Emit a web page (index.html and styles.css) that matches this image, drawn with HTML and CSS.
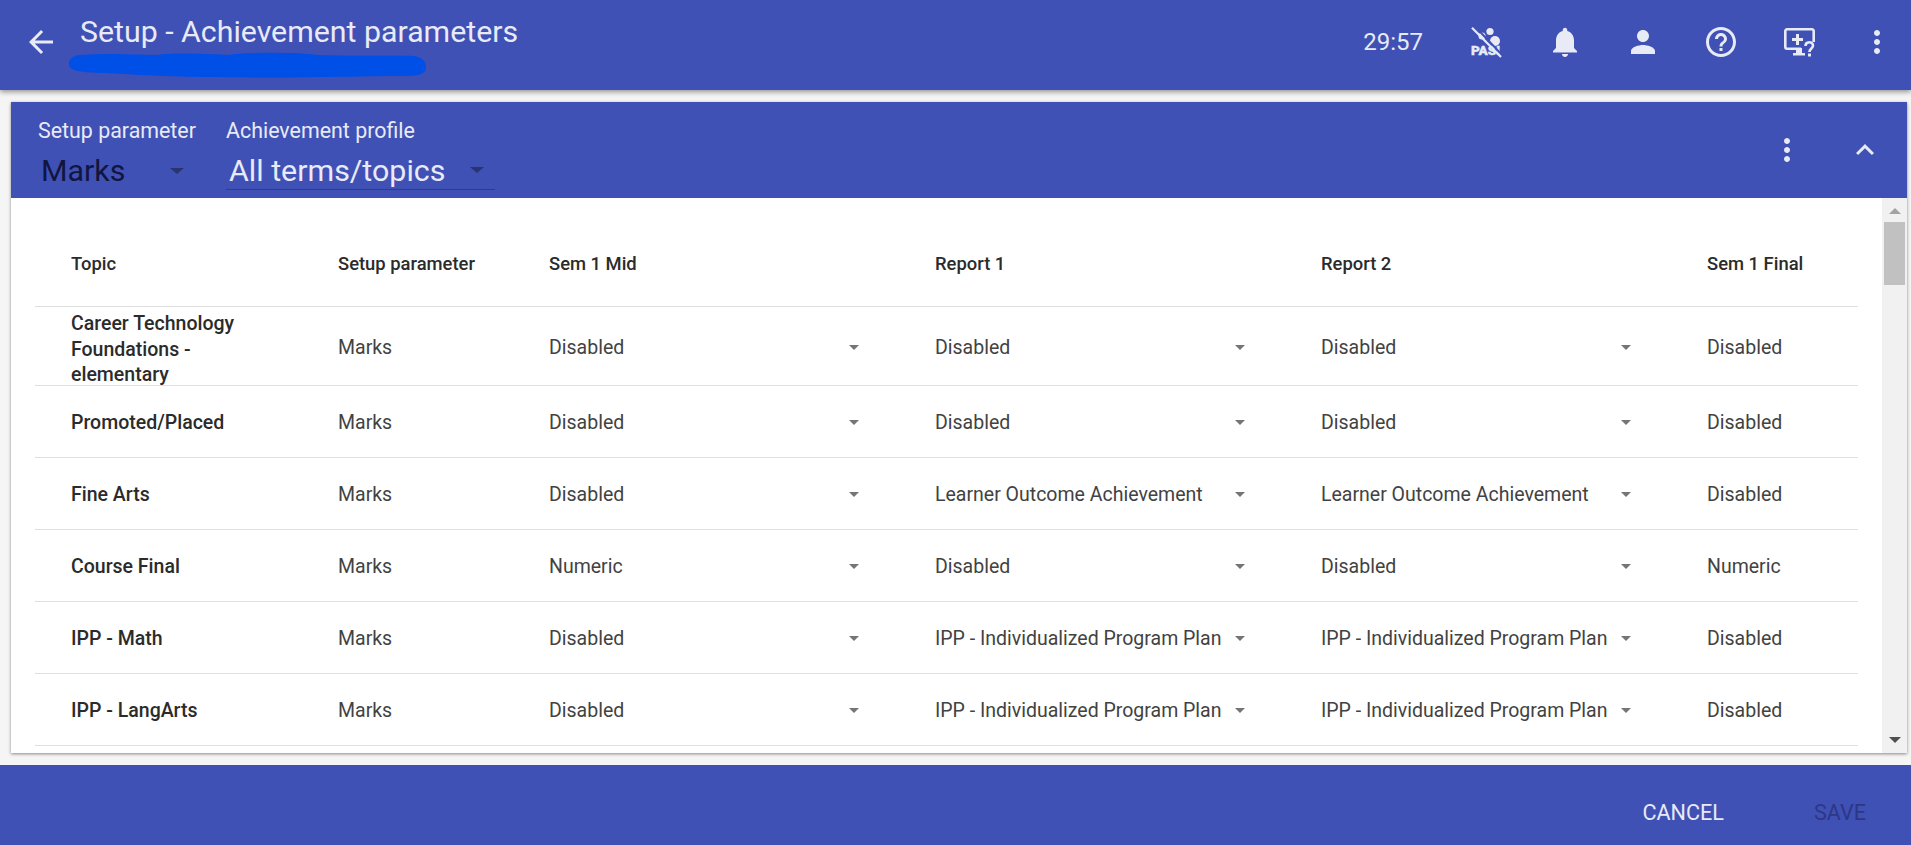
FILE: index.html
```html
<!DOCTYPE html>
<html lang="en">
<head>
    <meta charset="UTF-8">
    <title>Setup - Achievement parameters</title>
    <link rel="stylesheet" href="styles.css">
</head>
<body>
    <header class="topbar">
        <button class="icon-btn back-btn">
            <svg viewBox="0 0 24 24"><path d="M20 11H7.83l5.59-5.59L12 4l-8 8 8 8 1.41-1.41L7.83 13H20v-2z"/></svg>
        </button>
        <div class="title-block">
            <h1 class="title">Setup - Achievement parameters</h1>
            <svg class="scribble" viewBox="0 0 357 26" preserveAspectRatio="none"><path d="M12 3 C40 1 70 3 90 3 C100 1 130 1 160 3 C175 0 230 0 250 3 C280 4 320 3 345 4 C355 5 358 12 357 17 C355 24 345 24 330 24 C300 24 280 25 250 25 C220 26 190 26 150 25 C110 25 70 23 40 21 C25 21 10 20 5 17 C0 14 0 5 12 3 Z"/></svg>
        </div>
        <div class="timer">29:57</div>
        <button class="icon-btn pa-btn">
            <svg viewBox="0 0 36 36">
                <circle cx="21" cy="7.5" r="3.6"/>
                <circle cx="26" cy="17" r="5"/>
                <circle cx="13" cy="12" r="3.5"/>
                <text x="2" y="31" class="pa-text">PAS!</text>
                <path class="pa-slash-bg" d="M6 2.5 L34 32"/>
                <path class="pa-slash" d="M3 3.7 L32 33"/>
            </svg>
        </button>
        <button class="icon-btn">
            <svg viewBox="0 0 24 24"><path d="M12 22c1.1 0 2-.9 2-2h-4c0 1.1.89 2 2 2zm6-6v-5c0-3.07-1.64-5.64-4.5-6.32V4c0-.83-.67-1.5-1.5-1.5s-1.5.67-1.5 1.5v.68C7.63 5.36 6 7.92 6 11v5l-2 2v1h16v-1l-2-2z"/></svg>
        </button>
        <button class="icon-btn">
            <svg viewBox="0 0 24 24"><path d="M12 12c2.21 0 4-1.79 4-4s-1.79-4-4-4-4 1.79-4 4 1.79 4 4 4zm0 2c-2.67 0-8 1.34-8 4v2h16v-2c0-2.66-5.33-4-8-4z"/></svg>
        </button>
        <button class="icon-btn">
            <svg viewBox="0 0 24 24"><path d="M11 18h2v-2h-2v2zm1-16C6.48 2 2 6.48 2 12s4.48 10 10 10 10-4.48 10-10S17.52 2 12 2zm0 18c-4.41 0-8-3.59-8-8s3.59-8 8-8 8 3.59 8 8-3.59 8-8 8zm0-14c-2.21 0-4 1.79-4 4h2c0-1.1.9-2 2-2s2 .9 2 2c0 2-3 1.75-3 5h2c0-2.25 3-2.5 3-5 0-2.21-1.79-4-4-4z"/></svg>
        </button>
        <button class="icon-btn">
            <svg viewBox="0 0 36 36">
                <path class="line" d="M20 24.7 H6 a1.7 1.7 0 0 1 -1.7 -1.7 V7 a1.7 1.7 0 0 1 1.7 -1.7 H31 a1.7 1.7 0 0 1 1.7 1.7 V18"/>
                <path d="M15 24 h6 v5 h3 v2.5 H12 V29 h3z"/>
                <path d="M15 10 h3 v4 h4 v3 h-4 v4 h-3 v-4 h-4 v-3 h4z"/>
                <path class="line" d="M24.5 22 c0 -5 7.5 -5 7.5 -0.5 c0 3 -3.5 3 -3.5 6.5"/>
                <rect x="27" y="29.5" width="3" height="3"/>
            </svg>
        </button>
        <button class="icon-btn">
            <svg viewBox="0 0 24 24"><path d="M12 8c1.1 0 2-.9 2-2s-.9-2-2-2-2 .9-2 2 .9 2 2 2zm0 2c-1.1 0-2 .9-2 2s.9 2 2 2 2-.9 2-2-.9-2-2-2zm0 6c-1.1 0-2 .9-2 2s.9 2 2 2 2-.9 2-2-.9-2-2-2z"/></svg>
        </button>
    </header>

    <main class="card">
        <div class="card-head">
            <div class="field field-param">
                <label class="field-label">Setup parameter</label>
                <div class="field-value value-dark"><span>Marks</span><i class="caret caret-dark"></i></div>
            </div>
            <div class="field field-profile">
                <label class="field-label">Achievement profile</label>
                <div class="field-value value-line"><span>All terms/topics</span><i class="caret caret-dark"></i></div>
            </div>
            <button class="icon-btn head-dots">
                <svg viewBox="0 0 24 24"><path d="M12 8c1.1 0 2-.9 2-2s-.9-2-2-2-2 .9-2 2 .9 2 2 2zm0 2c-1.1 0-2 .9-2 2s.9 2 2 2 2-.9 2-2-.9-2-2-2zm0 6c-1.1 0-2 .9-2 2s.9 2 2 2 2-.9 2-2-.9-2-2-2z"/></svg>
            </button>
            <button class="icon-btn head-collapse">
                <svg viewBox="0 0 24 24"><path d="M12 8l-6 6 1.41 1.41L12 10.83l4.59 4.58L18 14z"/></svg>
            </button>
        </div>
        <div class="card-body">
            <div class="table-wrap">
                <table class="grid">
                    <colgroup>
                        <col class="col-topic">
                        <col class="col-setup">
                        <col class="col-term">
                        <col class="col-term">
                        <col class="col-term">
                        <col class="col-final">
                    </colgroup>
                    <thead>
                        <tr>
                            <th>Topic</th>
                            <th>Setup parameter</th>
                            <th>Sem 1 Mid</th>
                            <th>Report 1</th>
                            <th>Report 2</th>
                            <th>Sem 1 Final</th>
                        </tr>
                    </thead>
                    <tbody>
                        <tr class="row-tall">
                            <td class="topic"><div class="topic-wrap">Career Technology Foundations - elementary</div></td>
                            <td>Marks</td>
                            <td><div class="cell-select"><span>Disabled</span><i class="caret"></i></div></td>
                            <td><div class="cell-select"><span>Disabled</span><i class="caret"></i></div></td>
                            <td><div class="cell-select"><span>Disabled</span><i class="caret"></i></div></td>
                            <td>Disabled</td>
                        </tr>
                        <tr>
                            <td class="topic">Promoted/Placed</td>
                            <td>Marks</td>
                            <td><div class="cell-select"><span>Disabled</span><i class="caret"></i></div></td>
                            <td><div class="cell-select"><span>Disabled</span><i class="caret"></i></div></td>
                            <td><div class="cell-select"><span>Disabled</span><i class="caret"></i></div></td>
                            <td>Disabled</td>
                        </tr>
                        <tr>
                            <td class="topic">Fine Arts</td>
                            <td>Marks</td>
                            <td><div class="cell-select"><span>Disabled</span><i class="caret"></i></div></td>
                            <td><div class="cell-select"><span>Learner Outcome Achievement</span><i class="caret"></i></div></td>
                            <td><div class="cell-select"><span>Learner Outcome Achievement</span><i class="caret"></i></div></td>
                            <td>Disabled</td>
                        </tr>
                        <tr>
                            <td class="topic">Course Final</td>
                            <td>Marks</td>
                            <td><div class="cell-select"><span>Numeric</span><i class="caret"></i></div></td>
                            <td><div class="cell-select"><span>Disabled</span><i class="caret"></i></div></td>
                            <td><div class="cell-select"><span>Disabled</span><i class="caret"></i></div></td>
                            <td>Numeric</td>
                        </tr>
                        <tr>
                            <td class="topic">IPP - Math</td>
                            <td>Marks</td>
                            <td><div class="cell-select"><span>Disabled</span><i class="caret"></i></div></td>
                            <td><div class="cell-select"><span>IPP - Individualized Program Plan</span><i class="caret"></i></div></td>
                            <td><div class="cell-select"><span>IPP - Individualized Program Plan</span><i class="caret"></i></div></td>
                            <td>Disabled</td>
                        </tr>
                        <tr>
                            <td class="topic">IPP - LangArts</td>
                            <td>Marks</td>
                            <td><div class="cell-select"><span>Disabled</span><i class="caret"></i></div></td>
                            <td><div class="cell-select"><span>IPP - Individualized Program Plan</span><i class="caret"></i></div></td>
                            <td><div class="cell-select"><span>IPP - Individualized Program Plan</span><i class="caret"></i></div></td>
                            <td>Disabled</td>
                        </tr>
                    </tbody>
                </table>
            </div>
            <div class="scrollbar">
                <i class="scroll-up"></i>
                <div class="scroll-thumb"></div>
                <i class="scroll-down"></i>
            </div>
        </div>
    </main>

    <footer class="footer">
        <button class="text-btn">CANCEL</button>
        <button class="text-btn text-btn-off">SAVE</button>
    </footer>
</body>
</html>
```

FILE: styles.css
```css
* {
    box-sizing: border-box;
}
html, body {
    height: 100%;
}
body {
    margin: 0;
    display: flex;
    flex-direction: column;
    overflow: hidden;
    background: #f5f5f5;
    font-family: Roboto, "Liberation Sans", sans-serif;
    color: #424242;
}
button {
    font-family: inherit;
    background: none;
    border: none;
    padding: 0;
}

/* top bar */
.topbar {
    height: 90px;
    flex: none;
    display: flex;
    align-items: center;
    padding: 0 10px 6px 0;
    background: #3f51b5;
    color: #e8eaf6;
    box-shadow: 0 2px 5px rgba(0, 0, 0, 0.4);
    position: relative;
}
.icon-btn {
    width: 48px;
    height: 48px;
    flex: none;
    display: flex;
    align-items: center;
    justify-content: center;
    margin-left: 30px;
}
.icon-btn svg {
    width: 36px;
    height: 36px;
    fill: #e8eaf6;
}
.back-btn {
    margin-left: 17px;
}
.title-block {
    align-self: flex-start;
    margin-left: 15px;
    padding-top: 14px;
}
.title {
    margin: 0;
    font-size: 30.3px;
    font-weight: 400;
    line-height: 36px;
}
.scribble {
    display: block;
    width: 359px;
    height: 26px;
    margin: 2px 0 0 -13px;
    fill: #0050e8;
}
.timer {
    margin-left: auto;
    margin-right: 10px;
    font-size: 24px;
}
.pa-text {
    font-size: 13.5px;
    font-weight: 900;
    fill: #e8eaf6;
    stroke: #e8eaf6;
    stroke-width: 0.4;
}
.pa-slash-bg {
    stroke: #3f51b5;
    stroke-width: 2;
}
.pa-slash {
    stroke: #e8eaf6;
    stroke-width: 2.2;
}
.icon-btn svg .line {
    fill: none;
    stroke: #e8eaf6;
    stroke-width: 2.6;
}

/* card */
.card {
    height: 651px;
    flex: none;
    margin: 12px 4px 0 11px;
    display: flex;
    flex-direction: column;
    background: #fff;
    box-shadow: 0 1px 3px rgba(0, 0, 0, 0.45);
}
.card-head {
    height: 96px;
    flex: none;
    display: flex;
    align-items: center;
    padding-right: 18px;
    background: #3f51b5;
    color: #e8eaf6;
}
.field {
    align-self: flex-start;
    padding-top: 15px;
}
.field-param {
    width: 188px;
    margin-left: 27px;
}
.field-profile {
    width: 269px;
}
.field-label {
    display: block;
    font-size: 21.4px;
    line-height: 28px;
}
.field-value {
    display: flex;
    align-items: center;
    justify-content: space-between;
    height: 39px;
    margin-top: 6px;
    font-size: 30.4px;
    padding-left: 3px;
}
.value-dark {
    width: 146px;
    padding-left: 3px;
    color: #12153f;
}
.value-line {
    padding-right: 11px;
    border-bottom: 1px solid rgba(0, 0, 0, 0.25);
}
.caret {
    display: block;
    flex: none;
    width: 0;
    height: 0;
    border-left: 5px solid transparent;
    border-right: 5px solid transparent;
    border-top: 5px solid #757575;
}
.caret-dark {
    border-left-width: 7px;
    border-right-width: 7px;
    border-top: 6px solid #2a3470;
}
.head-dots {
    margin-left: auto;
}
.head-collapse {
    margin-left: 30px;
}

/* table */
.card-body {
    flex: 1;
    min-height: 0;
    display: flex;
}
.table-wrap {
    flex: 1;
    min-width: 0;
    padding: 24px 24px 0;
    overflow: hidden;
}
.grid {
    width: 1823px;
    border-collapse: collapse;
    table-layout: fixed;
    font-size: 19.5px;
    line-height: 25.7px;
}
.col-topic { width: 303px; }
.col-setup { width: 211px; }
.col-term { width: 386px; }
.col-final { width: 151px; }
.grid th, .grid td {
    text-align: left;
    padding: 0;
    border-bottom: 1px solid #e0e0e0;
}
.grid th {
    height: 84px;
    font-weight: 500;
    font-size: 18.4px;
    color: #2b2b2b;
}
.grid td {
    height: 72px;
    padding-top: 4px;
}
.grid th:first-child, .grid td:first-child {
    padding-left: 36px;
    padding-right: 60px;
}
.row-tall td {
    height: 79px;
}
.row-tall td.topic {
    padding-top: 0;
}
.topic-wrap {
    margin: 4px 0 -4px;
}
.grid td.topic {
    font-weight: 500;
    color: #2b2b2b;
}
.cell-select {
    width: 310px;
    display: flex;
    align-items: center;
    justify-content: space-between;
}

/* scrollbar */
.scrollbar {
    width: 25px;
    flex: none;
    display: flex;
    flex-direction: column;
    align-items: center;
    background: #f1f1f1;
}
.scroll-up, .scroll-down {
    display: block;
    width: 0;
    height: 0;
    border-left: 6px solid transparent;
    border-right: 6px solid transparent;
}
.scroll-up {
    margin-top: 10px;
    border-bottom: 6px solid #a3a3a3;
}
.scroll-down {
    margin-top: auto;
    margin-bottom: 10px;
    border-top: 6px solid #505050;
}
.scroll-thumb {
    width: 21px;
    height: 63px;
    margin-top: 8px;
    background: #c1c1c1;
}

/* footer */
.footer {
    height: 80px;
    flex: none;
    margin-top: 12px;
    display: flex;
    align-items: center;
    justify-content: flex-end;
    padding: 14px 45px 0 0;
    background: #3f51b5;
}
.text-btn {
    font-size: 21.6px;
    color: #e8eaf6;
}
.text-btn-off {
    margin-left: 90px;
    color: #2d3785;
}
```
